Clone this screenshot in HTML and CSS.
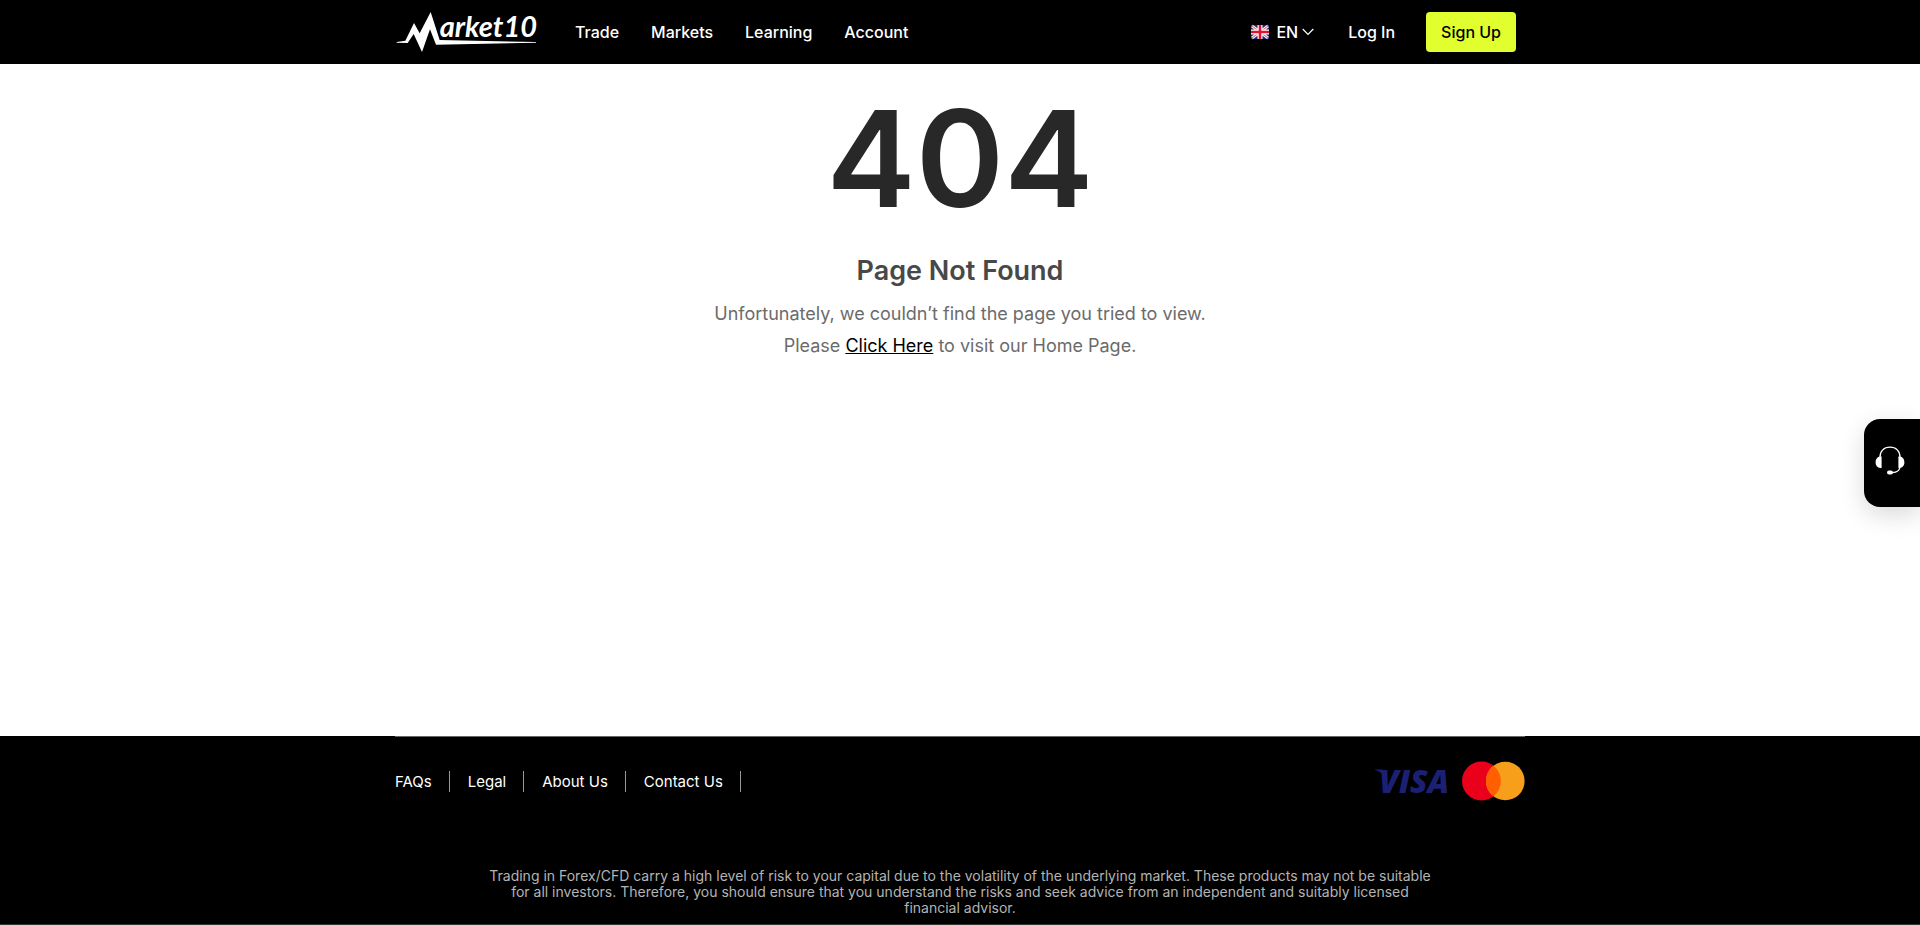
FILE: index.html
```html
<!DOCTYPE html>
<html lang="en">
<head>
    <meta charset="UTF-8">
    <meta name="viewport" content="width=device-width, initial-scale=1.0">
    <title>Page Not Found - Market10</title>
    <link rel="stylesheet" href="styles.css">
</head>
<body>
    <header class="header">
        <div class="container header-inner">
            <a href="#" class="logo" aria-label="Market10">
                <svg width="144" height="40" viewBox="-4 0 432 120">
                    <path fill="#fff" d="M1 90 L27 86 L53 33 L70 64 L103 0 L130 84 L419 90 L419 92 L119 98 L101 52 L77 120 L52 66 L34 93 L1 92 Z"/>
                    <text class="logo-text" x="130" y="74">arket10</text>
                </svg>
            </a>
            <nav class="nav">
                <a href="#">Trade</a>
                <a href="#">Markets</a>
                <a href="#">Learning</a>
                <a href="#">Account</a>
            </nav>
            <div class="header-right">
                <button type="button" class="lang">
                    <svg width="18" height="14" viewBox="0 0 18 14">
                        <rect width="18" height="14" fill="#20247c"/>
                        <path stroke="#e8e8f0" stroke-width="3" d="M1 1 L17 13 M17 1 L1 13"/>
                        <path stroke="#d8685a" stroke-width="1" d="M1 1 L17 13 M17 1 L1 13"/>
                        <path stroke="#fff" stroke-width="5" d="M9 0 V14 M0 7 H18"/>
                        <path stroke="#e4102e" stroke-width="2.6" d="M9 0 V14 M0 7 H18"/>
                    </svg>
                    <span>EN</span>
                    <svg class="arrow" width="12" height="8" viewBox="0 0 12 8">
                        <path fill="none" stroke="#fff" stroke-width="1.2" d="M0.7 1 L6 6.4 L11.3 1"/>
                    </svg>
                </button>
                <a href="#" class="login">Log In</a>
                <a href="#" class="signup">Sign Up</a>
            </div>
        </div>
    </header>

    <main class="main">
        <h1>404</h1>
        <h2>Page Not Found</h2>
        <p>Unfortunately, we couldn’t find the page you tried to view.<br>
        Please <a href="#">Click Here</a> to visit our Home Page.</p>
    </main>

    <footer class="footer">
        <div class="container">
            <div class="footer-top">
                <ul class="footer-links">
                    <li><a href="#">FAQs</a></li>
                    <li><a href="#">Legal</a></li>
                    <li><a href="#">About Us</a></li>
                    <li><a href="#">Contact Us</a></li>
                </ul>
                <div class="cards">
                    <svg width="78" height="40" viewBox="0 0 78 40" role="img" aria-label="Visa">
                        <path fill="#1c2072" d="M0 8.4 H8 L11 14 L12 19 Q8 11 0 9 Z"/>
                        <text class="visa-text" x="4" y="32">VISA</text>
                    </svg>
                    <svg width="63" height="40" viewBox="0 0 63 40" role="img" aria-label="Mastercard">
                        <circle cx="19.5" cy="20" r="19.5" fill="#eb001b"/>
                        <circle cx="43.3" cy="20" r="19.3" fill="#f79e1b"/>
                        <path fill="#ff5f00" d="M31.4 4.7 A19.4 19.4 0 0 1 31.4 35.3 A19.4 19.4 0 0 1 31.4 4.7 Z"/>
                    </svg>
                </div>
            </div>
            <p class="risk">Trading in Forex/CFD carry a high level of risk to your capital due to the volatility of the underlying market. These products may not be suitable for all investors. Therefore, you should ensure that you understand the risks and seek advice from an independent and suitably licensed financial advisor.</p>
        </div>
    </footer>

    <button type="button" class="support" aria-label="Support">
        <svg width="30" height="30" viewBox="0 0 30 30">
            <path fill="none" stroke="#fff" stroke-width="1.3" d="M5 12 V11 C5 5 9 1.2 15 1.2 S25 5 25 11 V12 M25 20 C25 24 22 26.6 17 26.6"/>
            <path fill="#fff" d="M6.6 10.5 V22 H5.4 C2.6 22 .6 19.5 .6 16.3 S2.6 10.5 5.4 10.5 Z M23.4 10.5 V22 H24.6 C27.4 22 29.4 19.5 29.4 16.3 S27.4 10.5 24.6 10.5 Z"/>
            <rect x="12" y="24.6" width="6" height="4" rx="2" fill="#fff"/>
        </svg>
    </button>
</body>
</html>
```
FILE: styles.css
```css
* {
    box-sizing: border-box;
}
body {
    margin: 0;
    min-height: 100vh;
    display: flex;
    flex-direction: column;
    font-family: Inter, "Liberation Sans", sans-serif;
    background-color: #fff;
}
a {
    color: inherit;
    text-decoration: none;
}
svg {
    display: block;
    overflow: visible;
}
.container {
    width: 100%;
    max-width: 1130px;
    margin: 0 auto;
}

/* header */
.header {
    background-color: #000;
    color: #fff;
    font-size: 16px;
    font-weight: 500;
}
.header-inner {
    display: flex;
    align-items: center;
    height: 64px;
    padding-right: 9px;
}
.logo-text {
    font-family: Lato, sans-serif;
    font-size: 87px;
    font-weight: 700;
    font-style: italic;
    fill: #fff;
}
.nav {
    display: flex;
    gap: 32px;
    margin-left: 36px;
}
.header-right {
    display: flex;
    align-items: center;
    margin-left: auto;
}
.lang {
    display: flex;
    align-items: center;
    gap: 7px;
    padding: 0;
    border: 0;
    background: none;
    color: inherit;
    font: inherit;
    cursor: pointer;
}
.arrow {
    margin-left: -3px;
}
.login {
    margin: 0 31px 0 34px;
}
.signup {
    padding: 0 15px;
    line-height: 40px;
    border-radius: 4px;
    background-color: #e1ff2e;
    color: #000;
}

/* page content */
.main {
    flex: 1;
    min-height: 672px;
    text-align: center;
}
.main h1 {
    margin: 14px 0 0;
    font-size: 134px;
    line-height: 160px;
    font-weight: 600;
    color: #282828;
}
.main h2 {
    margin: 15px 0 9px;
    font-size: 27px;
    line-height: 36px;
    font-weight: 600;
    color: #484848;
}
.main p {
    margin: 0;
    font-size: 18px;
    line-height: 32px;
    color: #6b6b6b;
}
.main a {
    color: #000;
    text-decoration: underline;
}

/* footer */
.footer {
    background-color: #000;
    color: #fff;
    border-bottom: 1px solid #333;
}
.footer-top {
    display: flex;
    align-items: center;
    justify-content: space-between;
    padding: 24px 0;
    border-top: 1px solid #666;
}
.footer-links {
    display: flex;
    gap: 18px;
    margin: 0;
    padding: 0;
    list-style: none;
    font-size: 15px;
    line-height: 21px;
}
.footer-links li {
    padding-right: 17px;
    border-right: 1px solid #999;
}
.cards {
    display: flex;
    align-items: center;
    gap: 9px;
}
.visa-text {
    font-family: "Open Sans", sans-serif;
    font-size: 32px;
    font-weight: 800;
    font-style: italic;
    fill: #1c2072;
}
.risk {
    max-width: 950px;
    margin: 43px auto 8px;
    font-size: 14px;
    line-height: 16px;
    text-align: center;
    color: #b4b4b4;
}

/* support button */
.support {
    position: fixed;
    right: 0;
    top: 419px;
    width: 56px;
    height: 88px;
    padding: 0 0 4px 11px;
    border: 0;
    border-radius: 16px 0 0 16px;
    background-color: #000;
    box-shadow: 0 8px 24px rgba(0,0,0,0.15);
    cursor: pointer;
}
```
